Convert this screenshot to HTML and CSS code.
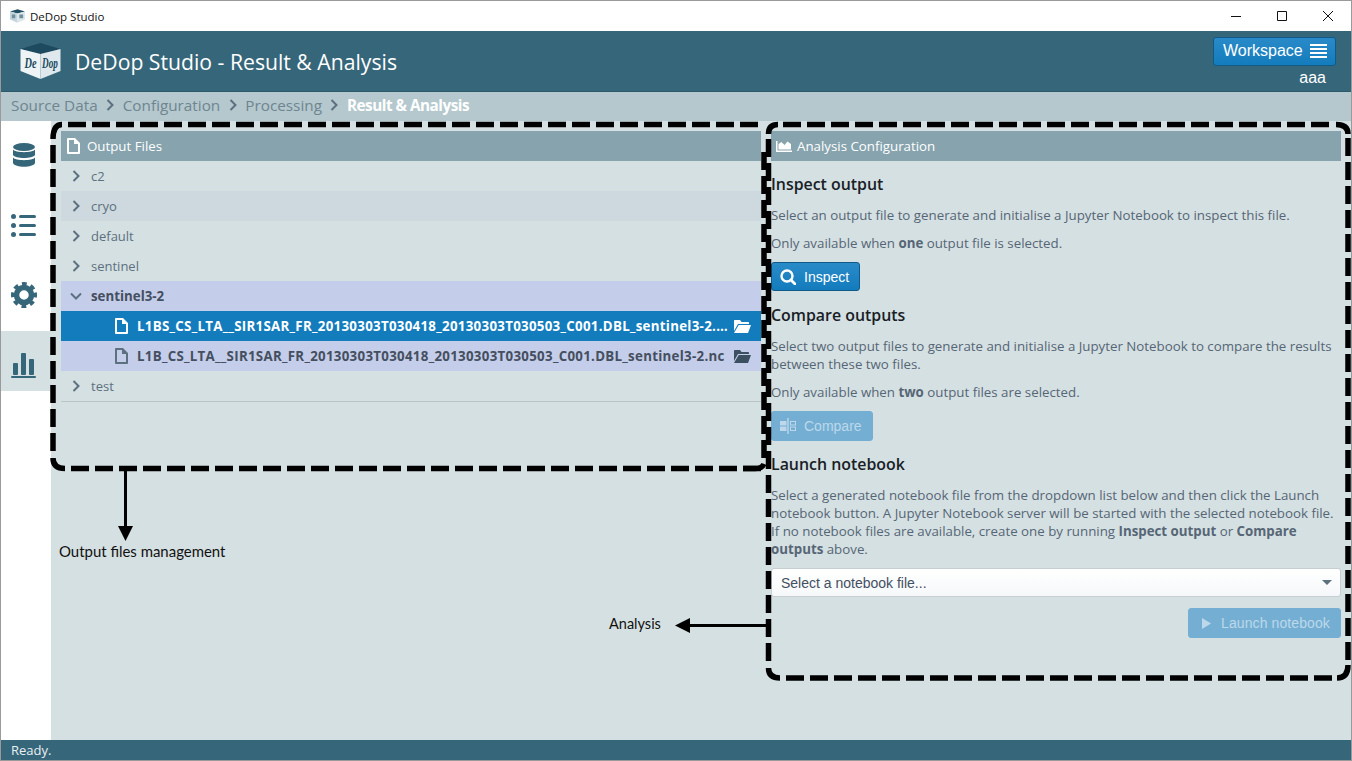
FILE: index.html
```html
<!DOCTYPE html>
<html lang="en">
<head>
    <meta charset="UTF-8">
    <meta name="viewport" content="width=device-width, initial-scale=1.0">
    <title>DeDop Studio</title>
    <link rel="stylesheet" href="styles.css">
</head>
<body>
<div class="window">

    <div class="titlebar">
        <svg class="title-logo" viewBox="0 0 40 36">
            <path d="M0 6 L20 0 L40 6 L20 11 Z" fill="#234f63"/>
            <path d="M0 6 L20 11 L20 36 L0 27 Z" fill="#c3d5dc"/>
            <path d="M40 6 L20 11 L20 36 L40 27 Z" fill="#dbe7eb"/>
            <path d="M5 14h9v10H5zM25 14h10v10H25z" fill="#6f8f9d"/>
        </svg>
        <span class="title-text">DeDop Studio</span>
        <div class="win-buttons">
            <svg viewBox="0 0 46 30"><path d="M18 15.5 H28" stroke="#111" fill="none"/></svg>
            <svg viewBox="0 0 46 30"><path d="M18.5 10.5 H27.5 V19.5 H18.5 Z" stroke="#111" fill="none"/></svg>
            <svg viewBox="0 0 46 30"><path d="M18 10 L28 20 M28 10 L18 20" stroke="#111" fill="none"/></svg>
        </div>
    </div>

    <div class="app-header">
        <svg class="logo" viewBox="0 0 40 36">
            <path d="M0 6 L20 0 L40 6 L20 11 Z" fill="#1d4a5e"/>
            <path d="M0 6 L20 11 L20 36 L0 28 Z" fill="#eef4f6"/>
            <path d="M40 6 L20 11 L20 36 L40 28 Z" fill="#dfe9ed"/>
            <text transform="translate(4 25) scale(.9 1.350)" class="logo-text">De</text>
            <text transform="translate(21.500 25) scale(.8 1.350)" class="logo-text">Dop</text>
        </svg>
        <div class="app-title">DeDop Studio - Result &amp; Analysis</div>
        <div class="header-right">
            <button class="btn workspace-btn">Workspace
                <svg viewBox="0 0 17 14"><path d="M0 0h17v2H0zM0 4h17v2H0zM0 8h17v2H0zM0 12h17v2H0z" fill="#fff"/></svg>
            </button>
            <div class="user-name">aaa</div>
        </div>
    </div>

    <div class="crumbs">
        <span>Source Data</span>
        <svg class="crumb-sep" viewBox="0 0 8 12"><path d="M1.5 1 L6.5 6 L1.5 11" fill="none" stroke="#5c7080" stroke-width="2"/></svg>
        <span>Configuration</span>
        <svg class="crumb-sep" viewBox="0 0 8 12"><path d="M1.5 1 L6.5 6 L1.5 11" fill="none" stroke="#5c7080" stroke-width="2"/></svg>
        <span>Processing</span>
        <svg class="crumb-sep" viewBox="0 0 8 12"><path d="M1.5 1 L6.5 6 L1.5 11" fill="none" stroke="#5c7080" stroke-width="2"/></svg>
        <span class="crumb-active">Result &amp; Analysis</span>
    </div>

    <div class="content">
        <div class="sidebar">
            <div class="side-item">
                <svg viewBox="0 0 22 24" class="side-db">
                    <ellipse cx="11" cy="4" rx="11" ry="4"/>
                    <path d="M0 6.5 C2 10 20 10 22 6.5 V12 C20 16 2 16 0 12 Z"/>
                    <path d="M0 14.5 C2 18 20 18 22 14.5 V20 C20 25 2 25 0 20 Z"/>
                </svg>
            </div>
            <div class="side-item">
                <svg viewBox="0 0 25 23" class="side-icon">
                    <circle cx="2.5" cy="2.5" r="2.5"/><circle cx="2.5" cy="11.5" r="2.5"/><circle cx="2.5" cy="20.5" r="2.5"/>
                    <rect x="8" y="1" width="17" height="3" rx="1.5"/><rect x="8" y="10" width="17" height="3" rx="1.5"/><rect x="8" y="19" width="17" height="3" rx="1.5"/>
                </svg>
            </div>
            <div class="side-item">
                <svg viewBox="0 0 26 26" class="side-gear">
                    <circle cx="13" cy="13" r="7.500" fill="none" stroke="#36667a" stroke-width="5.500"/>
                    <circle cx="13" cy="13" r="10.500" fill="none" stroke="#36667a" stroke-width="5" stroke-dasharray="4.400 3.847" transform="rotate(-12 13 13)"/>
                </svg>
            </div>
            <div class="side-item side-active">
                <svg viewBox="0 0 25 25" class="side-icon">
                    <rect x="2" y="10" width="5" height="12" rx="1"/><rect x="10" y="0" width="5" height="22" rx="1"/><rect x="18" y="6" width="5" height="16" rx="1"/>
                    <rect x="0" y="23" width="25" height="2" rx="1"/>
                </svg>
            </div>
        </div>

        <div class="main">
            <div class="panel panel-files">
                <div class="panel-header">
                    <svg class="doc-icon" viewBox="0 0 13 16"><path d="M8 0H1C.5 0 0 .5 0 1v14c0 .5.5 1 1 1h11c.5 0 1-.5 1-1V5zm3 14H2V2h5v4h4z" fill="#fff"/></svg>
                    Output Files
                </div>
                <div class="tree">
                    <div class="tree-row">
                        <svg class="chev" viewBox="0 0 8 12"><path d="M1.5 1 L6.500 6 L1.500 11"/></svg><span>c2</span>
                    </div>
                    <div class="tree-row row-hover">
                        <svg class="chev" viewBox="0 0 8 12"><path d="M1.5 1 L6.500 6 L1.500 11"/></svg><span>cryo</span>
                    </div>
                    <div class="tree-row">
                        <svg class="chev" viewBox="0 0 8 12"><path d="M1.5 1 L6.500 6 L1.500 11"/></svg><span>default</span>
                    </div>
                    <div class="tree-row">
                        <svg class="chev" viewBox="0 0 8 12"><path d="M1.5 1 L6.500 6 L1.500 11"/></svg><span>sentinel</span>
                    </div>
                    <div class="tree-row row-open">
                        <svg class="chev chev-down" viewBox="0 0 12 8"><path d="M1 1.500 L6 6.500 L11 1.500"/></svg><span>sentinel3-2</span>
                    </div>
                    <div class="tree-row file-row file-selected">
                        <svg class="file-icon" viewBox="0 0 13 16"><path d="M8 0H1C.5 0 0 .5 0 1v14c0 .5.5 1 1 1h11c.5 0 1-.5 1-1V5zm3 14H2V2h5v4h4z"/></svg>
                        <span class="file-name">L1BS_CS_LTA__SIR1SAR_FR_20130303T030418_20130303T030503_C001.DBL_sentinel3-2.nc</span>
                        <svg class="folder-icon" viewBox="0 0 17 13"><path d="M1 0h5l1.500 2H14c.6 0 1 .4 1 1v1H4L0 11V1c0-.6.4-1 1-1z M4.700 5H17l-3 8H0z"/></svg>
                    </div>
                    <div class="tree-row file-row row-open">
                        <svg class="file-icon" viewBox="0 0 13 16"><path d="M8 0H1C.5 0 0 .5 0 1v14c0 .5.5 1 1 1h11c.5 0 1-.5 1-1V5zm3 14H2V2h5v4h4z"/></svg>
                        <span class="file-name">L1B_CS_LTA__SIR1SAR_FR_20130303T030418_20130303T030503_C001.DBL_sentinel3-2.nc</span>
                        <svg class="folder-icon" viewBox="0 0 17 13"><path d="M1 0h5l1.500 2H14c.6 0 1 .4 1 1v1H4L0 11V1c0-.6.4-1 1-1z M4.700 5H17l-3 8H0z"/></svg>
                    </div>
                    <div class="tree-row row-last">
                        <svg class="chev" viewBox="0 0 8 12"><path d="M1.5 1 L6.500 6 L1.500 11"/></svg><span>test</span>
                    </div>
                </div>
            </div>

            <div class="panel panel-analysis">
                <div class="panel-header header-analysis">
                    <svg class="area-icon" viewBox="0 0 16 11"><path d="M0 0h1.500v9.500H16V11H0z M2.500 8.500V3l3-2 3 3 3-3.500 3.500 2.500v5.500z" fill="#fff"/></svg>
                    Analysis Configuration
                </div>
                <div class="panel-body">
                    <h3>Inspect output</h3>
                    <p>Select an output file to generate and initialise a Jupyter Notebook to inspect this file.</p>
                    <p>Only available when <b>one</b> output file is selected.</p>
                    <button class="btn action-btn">
                        <svg viewBox="0 0 16 16"><circle cx="7" cy="7" r="5.500" fill="none" stroke="#fff" stroke-width="2.400"/><path d="M11 11 L15 15" stroke="#fff" stroke-width="2.800" stroke-linecap="round"/></svg>
                        Inspect
                    </button>

                    <h3>Compare outputs</h3>
                    <p>Select two output files to generate and initialise a Jupyter Notebook to compare the results between these two files.</p>
                    <p>Only available when <b>two</b> output files are selected.</p>
                    <button class="btn action-btn btn-disabled btn-compare">
                        <svg viewBox="0 0 16 16"><path d="M0 3h6.500v4.500H0zM0 8.500h6.500V13H0zM7.300 0h1.400v16H7.300z M10 3h6v4.500h-6z M11 4v2.500h4V4z M10 8.500h6V13h-6z M11 9.500V12h4V9.500z" fill-rule="evenodd" fill="#bcd8ea"/></svg>
                        Compare
                    </button>

                    <h3>Launch notebook</h3>
                    <p>Select a generated notebook file from the dropdown list below and then click the Launch notebook button. A Jupyter Notebook server will be started with the selected notebook file. If no notebook files are available, create one by running <b>Inspect output</b> or <b>Compare outputs</b> above.</p>
                    <div class="select-box">
                        <span>Select a notebook file...</span>
                        <i class="select-caret"></i>
                    </div>
                    <div class="launch-wrap">
                        <button class="btn btn-disabled launch-btn">
                            <svg viewBox="0 0 9 11"><path d="M0 0 L9 5.500 L0 11 Z" fill="#bcd8ea"/></svg>
                            Launch notebook
                        </button>
                    </div>
                </div>
            </div>
        </div>
    </div>

    <div class="statusbar">Ready.</div>
</div>

<!-- annotations drawn on top of the screenshot -->
<svg class="annotations" width="1352" height="761" viewBox="0 0 1352 761">
    <!-- output files box -->
    <path class="dash" d="M68 124.500 H759 M764 152 V458 M53 145 V452 M71 468.500 H761"/>
    <path class="corner" d="M53 139 Q53 124.500 62 124.500 M53 458 Q53 468.500 65 468.500 M743 468.500 H755 Q762 468.500 764 464"/>
    <!-- analysis box -->
    <path class="dash" d="M783 124.500 H1330 M1348 138 V660 M768.500 139 V661 M786 678 H1332"/>
    <path class="corner" d="M768.500 134 Q768.500 124.500 778 124.500 M1336 124.500 Q1348 124.500 1348 134 M1348 665 Q1348 678 1337 678 M768.500 668 Q768.500 678 780 678"/>
    <path class="arrow-line" d="M125.500 470 V527"/>
    <path d="M118 526 H133 L125.500 541 Z"/>
    <path class="arrow-line" d="M766 625.500 H689"/>
    <path d="M690 618 V633 L675 625.500 Z"/>
</svg>
<div class="note note-files">Output files management</div>
<div class="note note-analysis">Analysis</div>
</body>
</html>
```

FILE: styles.css
```css
html, body {
    margin: 0;
    height: 761px;
    overflow: hidden;
}
body {
    font-family: "Open Sans", sans-serif;
    font-size: 13px;
    color: #5c7080;
    background-color: #d5e0e2;
}
.window {
    box-sizing: border-box;
    width: 1352px;
    height: 761px;
    border: 1px solid #9a9a9a;
    display: flex;
    flex-direction: column;
}

/* window title */
.titlebar {
    height: 30px;
    flex: none;
    background-color: #fff;
    display: flex;
    align-items: center;
    padding-left: 9px;
    color: #111;
    font-size: 11.500px;
}
.title-logo {
    width: 15px;
    height: 14px;
    margin-right: 5px;
}
.win-buttons {
    margin-left: auto;
    display: flex;
}
.win-buttons svg {
    width: 46px;
    height: 30px;
}

/* app header */
.app-header {
    height: 60px;
    flex: none;
    background-color: #36667a;
    border-bottom: 1px solid #2d5a6d;
    box-sizing: content-box;
    display: flex;
    align-items: center;
    padding-left: 19px;
    color: #fff;
}
.logo {
    width: 41px;
    height: 36px;
    margin-right: 14px;
}
.logo-text {
    font-family: "Liberation Serif", serif;
    font-style: italic;
    font-weight: bold;
    font-size: 11.500px;
    fill: #1d4a5e;
}
.app-title {
    font-size: 21.200px;
}
.header-right {
    margin-left: auto;
    margin-right: 15px;
    align-self: flex-start;
    padding-top: 6px;
    text-align: right;
}
.btn {
    font-family: "Liberation Sans", sans-serif;
    color: #fff;
    border: 1px solid #0f5a88;
    border-radius: 3px;
    background: linear-gradient(to bottom, #2a8ac8, #137cbd);
    display: inline-flex;
    align-items: center;
    padding: 0;
}
.workspace-btn {
    width: 123px;
    height: 29px;
    font-size: 16px;
    padding: 0 0 2px 9px;
    box-sizing: border-box;
}
.workspace-btn svg {
    width: 17px;
    height: 14px;
    margin-left: 7px;
}
.user-name {
    font-size: 16px;
    line-height: 18px;
    margin-top: 3px;
    padding-right: 10px;
    font-family: "Liberation Sans", sans-serif;
}

/* breadcrumb */
.crumbs {
    box-sizing: border-box;
    height: 29px;
    flex: none;
    background-color: #b4c8ce;
    display: flex;
    align-items: center;
    padding: 0 0 3px 10px;
    font-size: 15.300px;
    color: #6f858f;
}
.crumb-sep {
    width: 8px;
    height: 12px;
    margin: 0 8.500px;
}
.crumb-active {
    color: #fff;
    font-weight: 700;
    letter-spacing: -0.500px;
}

/* sidebar + main */
.content {
    flex: 1;
    display: flex;
    min-height: 0;
}
.sidebar {
    width: 50px;
    flex: none;
    background-color: #fff;
}
.side-item {
    box-sizing: border-box;
    height: 60px;
    margin-bottom: 10px;
    padding: 8px 5px 0 0;
    display: flex;
    align-items: center;
    justify-content: center;
    fill: #36667a;
}
.side-active {
    background-color: #d5e0e2;
}
.side-icon {
    width: 25px;
    height: 25px;
}
.side-db {
    width: 22px;
    height: 24px;
}
.side-gear {
    width: 26px;
    height: 26px;
}
.main {
    flex: 1;
    display: flex;
    gap: 10px;
    padding: 10px;
    align-items: flex-start;
}
.panel-files {
    width: 700px;
    flex: none;
}
.panel-analysis {
    width: 570px;
    flex: none;
}
.panel-header {
    height: 30px;
    background-color: #86a3ae;
    color: #fff;
    font-size: 13.300px;
    display: flex;
    align-items: center;
    padding-left: 6px;
}
.header-analysis {
    padding-left: 5px;
}
.doc-icon {
    width: 13px;
    height: 16px;
    margin-right: 7px;
}
.area-icon {
    width: 16px;
    height: 11px;
    margin-right: 5px;
}

/* file tree */
.tree-row {
    height: 30px;
    display: flex;
    align-items: center;
    padding-left: 11px;
}
.row-hover {
    background-color: #cdd9de;
}
.row-open {
    background-color: #c4cde9;
    font-weight: 700;
    font-size: 13.300px;
    color: #444f5f;
}
.row-last {
    border-bottom: 1px solid #b9c5c8;
}
.chev {
    width: 8px;
    height: 12px;
    margin-right: 11px;
    fill: none;
    stroke: #5c7080;
    stroke-width: 2;
    flex: none;
}
.chev-down {
    width: 12px;
    height: 8px;
    margin-left: -2px;
    margin-right: 9px;
}
.file-row {
    padding-left: 54px;
    font-weight: 700;
    font-size: 13.300px;
}
.file-selected {
    background-color: #137cbd;
    color: #fff;
    fill: #fff;
}
.row-open.file-row {
    fill: #5c7080;
}
.file-icon {
    width: 13px;
    height: 16px;
    margin-right: 9px;
    flex: none;
}
.file-name {
    flex: 1;
    min-width: 0;
    letter-spacing: 0.290px;
    overflow: hidden;
    white-space: nowrap;
    text-overflow: ellipsis;
}
.folder-icon {
    width: 17px;
    height: 13px;
    margin: 0 10px 0 4px;
    flex: none;
}
.row-open .folder-icon {
    fill: #3b4f60;
}

/* analysis panel */
.panel-body {
    padding-top: 13px;
}
h3 {
    margin: 0 0 12px;
    font-size: 15.900px;
    line-height: 20px;
    font-weight: 600;
    color: #182026;
}
p {
    margin: 0 0 10px;
    font-size: 13.300px;
    line-height: 18px;
    color: #566676;
}
b {
    font-weight: 700;
}
.action-btn {
    height: 29px;
    width: 89px;
    box-sizing: border-box;
    font-size: 14px;
    margin-bottom: 14px;
    padding-left: 8px;
}
.action-btn svg {
    width: 16px;
    height: 16px;
    margin-right: 8px;
}
.btn-disabled {
    background: #74afd3;
    border-color: #74afd3;
    color: #bcd8ea;
}
.btn-compare {
    width: 102px;
    height: 30px;
    margin-bottom: 13px;
}
.select-box {
    box-sizing: border-box;
    height: 29px;
    margin-top: 10px;
    background: linear-gradient(to bottom, #fff, #f5f8fa);
    border: 1px solid #c6ced2;
    border-radius: 3px;
    display: flex;
    align-items: center;
    padding: 0 8px 0 9px;
    font-family: "Liberation Sans", sans-serif;
    font-size: 14px;
    color: #444f5f;
}
.select-caret {
    margin-left: auto;
    border-left: 5px solid transparent;
    border-right: 5px solid transparent;
    border-top: 5px solid #5c7080;
}
.launch-wrap {
    margin-top: 11px;
    display: flex;
    justify-content: flex-end;
}
.launch-btn {
    width: 153px;
    height: 30px;
    box-sizing: border-box;
    font-size: 14px;
    letter-spacing: 0.100px;
    padding-left: 13px;
}
.launch-btn svg {
    width: 9px;
    height: 11px;
    margin-right: 10px;
}

.statusbar {
    height: 20px;
    flex: none;
    background-color: #36667a;
    color: #e9f0f2;
    padding-left: 10px;
    line-height: 20px;
}

/* overlays */
.annotations {
    position: absolute;
    left: 0;
    top: 0;
    pointer-events: none;
}
.dash {
    fill: none;
    stroke: #000;
    stroke-width: 5.500;
    stroke-dasharray: 18 6;
}
.corner {
    fill: none;
    stroke: #000;
    stroke-width: 5.500;
}
.arrow-line {
    fill: none;
    stroke: #000;
    stroke-width: 3;
}
.note {
    position: absolute;
    font-family: Lato, sans-serif;
    font-size: 14.500px;
    line-height: 18px;
    color: #111;
}
.note-files {
    left: 59px;
    top: 542px;
    font-size: 14.950px;
}
.note-analysis {
    left: 609px;
    top: 615px;
}
```
